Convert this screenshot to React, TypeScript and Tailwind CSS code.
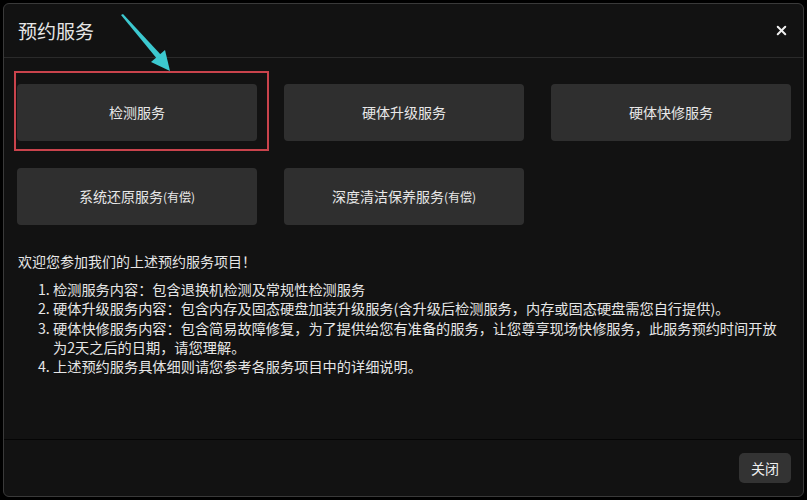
import { X } from "lucide-react";

const services = [
  "检测服务",
  "硬体升级服务",
  "硬体快修服务",
  "系统还原服务(有偿)",
  "深度清洁保养服务(有偿)",
];

const notes = [
  "检测服务内容：包含退换机检测及常规性检测服务",
  "硬体升级服务内容：包含内存及固态硬盘加装升级服务(含升级后检测服务，内存或固态硬盘需您自行提供)。",
  "硬体快修服务内容：包含简易故障修复，为了提供给您有准备的服务，让您尊享现场快修服务，此服务预约时间开放为2天之后的日期，请您理解。",
  "上述预约服务具体细则请您参考各服务项目中的详细说明。",
];

function ServiceLabel({ text }: { text: string }) {
  // the "(有偿)" part is drawn a bit smaller in the screenshot
  const i = text.indexOf("(");
  if (i < 0) return <>{text}</>;
  return (
    <>
      {text.slice(0, i)}
      <span className="text-[12px]">{text.slice(i)}</span>
    </>
  );
}

export default function App() {
  return (
    <div
      className="relative h-[500px] w-[807px] bg-black p-[3px] text-[#e6e6e6]"
      style={{ fontFamily: '"Noto Sans CJK SC", "Noto Sans", sans-serif' }}
    >
      <div className="flex h-full flex-col rounded-md border border-[#3a3a3a] bg-[#121212]">
        {/* header */}
        <div className="flex h-[54px] items-center justify-between border-b border-[#2a2a2a] pl-[14px] pr-[14px]">
          <h3 className="text-[19px] leading-none">预约服务</h3>
          <button className="text-[#f0f0f0]">
            <X size={15} strokeWidth={3.2} />
          </button>
        </div>

        {/* body */}
        <div className="flex-1 px-[13px] pt-[26px]">
          <div className="grid grid-cols-[240px_240px_240px] gap-[27px]">
            {services.map((s) => (
              <button
                key={s}
                className="h-[57px] rounded-[4px] bg-[#2f2f2f] text-[14px] text-[#e8e8e8]"
              >
                <ServiceLabel text={s} />
              </button>
            ))}
          </div>

          <p className="mt-[27px] pl-[1px] text-[14px] leading-[19px]">
            欢迎您参加我们的上述预约服务项目！
          </p>
          <ol className="mt-[9px] list-decimal pl-[36px] pr-[8px] text-[14.2px] leading-[19.3px]">
            {notes.map((n) => (
              <li key={n}>{n}</li>
            ))}
          </ol>
        </div>

        {/* footer */}
        <div className="flex h-[57px] items-center justify-end border-t border-[#050505] pr-[12px]">
          <button className="h-[30px] rounded-[5px] bg-[#333333] px-[12px] text-[14px] text-[#eeeeee]">
            关闭
          </button>
        </div>
      </div>

      {/* annotation overlay: red box + cyan arrow */}
      <div className="pointer-events-none absolute left-[14px] top-[71px] h-[80px] w-[255px] border-2 border-[#c9434c]" />
      <svg
        className="pointer-events-none absolute left-0 top-0"
        width="807"
        height="500"
      >
        <polygon points="121,15 123,14 162,56 158,60" fill="#3cc8cf" />
        <polygon points="170,71 151,62 165,50" fill="#3cc8cf" />
      </svg>
    </div>
  );
}
